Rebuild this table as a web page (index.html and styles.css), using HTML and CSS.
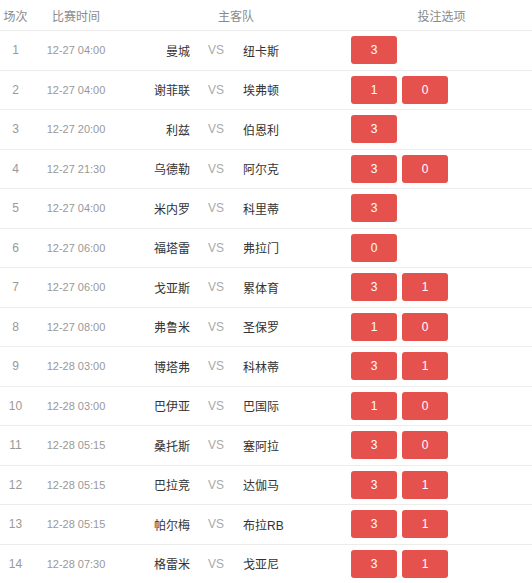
FILE: index.html
```html
<!DOCTYPE html>
<html lang="zh">
<head>
<meta charset="utf-8">
<link rel="stylesheet" href="styles.css">
</head>
<body>
<div class="table">
  <div class="row head">
    <div class="c-no">场次</div>
    <div class="c-time">比赛时间</div>
    <div class="c-teams">主客队</div>
    <div class="c-opt">投注选项</div>
  </div>
  <div class="row"><div class="c-no">1</div><div class="c-time">12-27 04:00</div><div class="c-home">曼城</div><div class="c-vs">VS</div><div class="c-away">纽卡斯</div><div class="c-btns"><span class="btn">3</span></div></div>
  <div class="row"><div class="c-no">2</div><div class="c-time">12-27 04:00</div><div class="c-home">谢菲联</div><div class="c-vs">VS</div><div class="c-away">埃弗顿</div><div class="c-btns"><span class="btn">1</span><span class="btn">0</span></div></div>
  <div class="row"><div class="c-no">3</div><div class="c-time">12-27 20:00</div><div class="c-home">利兹</div><div class="c-vs">VS</div><div class="c-away">伯恩利</div><div class="c-btns"><span class="btn">3</span></div></div>
  <div class="row"><div class="c-no">4</div><div class="c-time">12-27 21:30</div><div class="c-home">乌德勒</div><div class="c-vs">VS</div><div class="c-away">阿尔克</div><div class="c-btns"><span class="btn">3</span><span class="btn">0</span></div></div>
  <div class="row"><div class="c-no">5</div><div class="c-time">12-27 04:00</div><div class="c-home">米内罗</div><div class="c-vs">VS</div><div class="c-away">科里蒂</div><div class="c-btns"><span class="btn">3</span></div></div>
  <div class="row"><div class="c-no">6</div><div class="c-time">12-27 06:00</div><div class="c-home">福塔雷</div><div class="c-vs">VS</div><div class="c-away">弗拉门</div><div class="c-btns"><span class="btn">0</span></div></div>
  <div class="row"><div class="c-no">7</div><div class="c-time">12-27 06:00</div><div class="c-home">戈亚斯</div><div class="c-vs">VS</div><div class="c-away">累体育</div><div class="c-btns"><span class="btn">3</span><span class="btn">1</span></div></div>
  <div class="row"><div class="c-no">8</div><div class="c-time">12-27 08:00</div><div class="c-home">弗鲁米</div><div class="c-vs">VS</div><div class="c-away">圣保罗</div><div class="c-btns"><span class="btn">1</span><span class="btn">0</span></div></div>
  <div class="row"><div class="c-no">9</div><div class="c-time">12-28 03:00</div><div class="c-home">博塔弗</div><div class="c-vs">VS</div><div class="c-away">科林蒂</div><div class="c-btns"><span class="btn">3</span><span class="btn">1</span></div></div>
  <div class="row"><div class="c-no">10</div><div class="c-time">12-28 03:00</div><div class="c-home">巴伊亚</div><div class="c-vs">VS</div><div class="c-away">巴国际</div><div class="c-btns"><span class="btn">1</span><span class="btn">0</span></div></div>
  <div class="row"><div class="c-no">11</div><div class="c-time">12-28 05:15</div><div class="c-home">桑托斯</div><div class="c-vs">VS</div><div class="c-away">塞阿拉</div><div class="c-btns"><span class="btn">3</span><span class="btn">0</span></div></div>
  <div class="row"><div class="c-no">12</div><div class="c-time">12-28 05:15</div><div class="c-home">巴拉竞</div><div class="c-vs">VS</div><div class="c-away">达伽马</div><div class="c-btns"><span class="btn">3</span><span class="btn">1</span></div></div>
  <div class="row"><div class="c-no">13</div><div class="c-time">12-28 05:15</div><div class="c-home">帕尔梅</div><div class="c-vs">VS</div><div class="c-away">布拉RB</div><div class="c-btns"><span class="btn">3</span><span class="btn">1</span></div></div>
  <div class="row"><div class="c-no">14</div><div class="c-time">12-28 07:30</div><div class="c-home">格雷米</div><div class="c-vs">VS</div><div class="c-away">戈亚尼</div><div class="c-btns"><span class="btn">3</span><span class="btn">1</span></div></div>
</div>
</body>
</html>
```

FILE: styles.css
```css
html, body {
  margin: 0;
  padding: 0;
  background: #fff;
}
body {
  font-family: "Liberation Sans", "Noto Sans CJK SC", sans-serif;
  font-size: 12px;
  color: #333;
}
.table {
  width: 532px;
}
.row {
  display: grid;
  grid-template-columns: 31px 90px 76px 38px 116px 1fr;
  align-items: center;
  height: 38.5px;
  border-bottom: 1px solid #ececec;
}
.row.head {
  grid-template-columns: 31px 90px 230px 1fr;
  height: 30px;
  color: #8a8a8a;
}
.c-no {
  text-align: center;
  color: #999;
}
.head .c-no { color: #8a8a8a; }
.c-time {
  text-align: center;
  color: #999;
  font-size: 11px;
}
.head .c-time { color: #8a8a8a; font-size: 12px; }
.c-teams, .c-opt {
  text-align: center;
}
.c-home {
  text-align: right;
  padding-right: 7px;
  color: #333;
}
.c-vs {
  text-align: center;
  color: #aaa;
  font-size: 12px;
}
.c-away {
  text-align: left;
  padding-left: 8px;
  color: #333;
}
.c-btns {
  display: flex;
  gap: 5px;
}
.btn {
  display: flex;
  align-items: center;
  justify-content: center;
  width: 46px;
  height: 28px;
  background: #e5524e;
  color: #fff;
  border-radius: 3px;
  font-size: 12px;
}
```
